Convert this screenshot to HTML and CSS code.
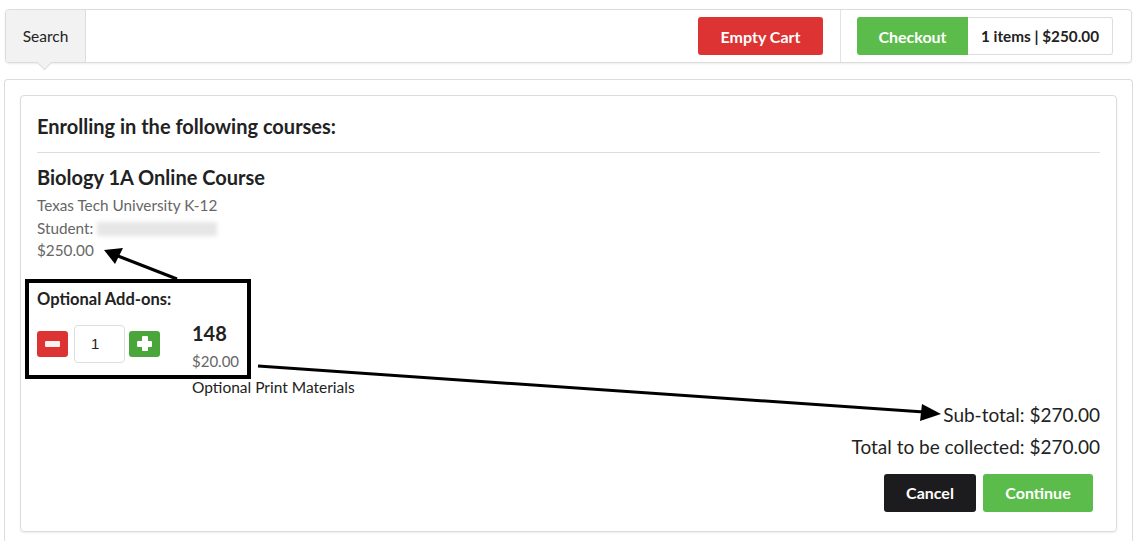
FILE: index.html
```html
<!DOCTYPE html>
<html>
<head>
<meta charset="utf-8">
<link rel="stylesheet" href="styles.css">
</head>
<body>
<div class="topbar">
  <div class="search-tab">Search</div>
  <div class="spacer"></div>
  <div class="cart-section">
    <button class="btn btn-red">Empty Cart</button>
  </div>
  <div class="checkout-section">
    <button class="btn btn-green checkout">Checkout</button>
    <div class="items">1 items | $250.00</div>
  </div>
</div>

<div class="outer">
  <div class="card">
    <h2 class="heading">Enrolling in the following courses:</h2>
    <div class="rule"></div>
    <h3 class="course">Biology 1A Online Course</h3>
    <div class="meta">Texas Tech University K-12</div>
    <div class="meta">Student: <span class="blurred"></span></div>
    <div class="meta">$250.00</div>

    <div class="addons">
      <div class="addons-title">Optional Add-ons:</div>
      <div class="addon-row">
        <div class="qty">
          <button class="qbtn qminus"><span class="bar"></span></button>
          <div class="qinput">1</div>
          <button class="qbtn qplus"><span class="bar"></span><span class="bar vbar"></span></button>
        </div>
        <div class="addon-info">
          <div class="addon-num">148</div>
          <div class="addon-price">$20.00</div>
          <div class="addon-name">Optional Print Materials</div>
        </div>
      </div>
    </div>

    <div class="totals">
      <div class="total-line">Sub-total: $270.00</div>
      <div class="total-line">Total to be collected: $270.00</div>
    </div>
    <div class="actions">
      <button class="btn btn-dark">Cancel</button>
      <button class="btn btn-green">Continue</button>
    </div>
  </div>
</div>

<svg class="annot" width="1142" height="541" viewBox="0 0 1142 541">
  <rect x="27" y="281" width="222" height="96" fill="none" stroke="#000" stroke-width="4"/>
  <line x1="177" y1="279" x2="118" y2="256" stroke="#000" stroke-width="3"/>
  <polygon points="104,250 123,248 115,264" fill="#000"/>
  <line x1="258" y1="366" x2="924" y2="412" stroke="#000" stroke-width="3"/>
  <polygon points="941,414 922,404 920,421" fill="#000"/>
</svg>
</body>
</html>
```

FILE: styles.css
```css
* { box-sizing: border-box; }
html, body { margin: 0; padding: 0; background: #fff; }
body {
  font-family: Lato, "Open Sans", "Liberation Sans", sans-serif;
  color: #222;
  position: relative;
  width: 1142px;
  height: 541px;
  overflow: hidden;
}
button { font-family: inherit; border: none; cursor: pointer; }

.topbar {
  margin: 9px 10px 0 5px;
  height: 54px;
  border: 1px solid #dcdcdc;
  border-radius: 4px;
  box-shadow: 0 1px 2px rgba(0,0,0,0.08);
  display: flex;
  align-items: stretch;
  background: #fff;
}
.search-tab {
  width: 80px;
  background: #f2f2f2;
  border-right: 1px solid #ddd;
  display: flex;
  align-items: center;
  justify-content: center;
  font-size: 15.5px;
  color: #222;
  position: relative;
  border-radius: 3px 0 0 3px;
}
.search-tab::after {
  content: "";
  position: absolute;
  left: 33px;
  bottom: -6px;
  width: 10px;
  height: 10px;
  background: #f2f2f2;
  transform: rotate(45deg);
  border-right: 1px solid #ddd;
  border-bottom: 1px solid #ddd;
}
.spacer { flex: 1; }
.cart-section {
  display: flex;
  align-items: center;
  padding: 0 17px;
  border-right: 1px solid #e2e2e2;
}
.checkout-section {
  display: flex;
  align-items: center;
  padding: 0 18px 0 16px;
}
.btn {
  height: 38px;
  border-radius: 3px;
  font-size: 16px;
  font-weight: 700;
  color: #fff;
  padding: 0;
}
.btn-red { background: #dd3333; width: 125px; }
.btn-green { background: #5bbb4b; width: 110px; }
.btn-dark { background: #1c1c1e; width: 92px; }
.checkout { width: 111px; border-radius: 3px 0 0 3px; }
.items {
  height: 38px;
  width: 145px;
  border: 1px solid #ddd;
  border-left: none;
  border-radius: 0 3px 3px 0;
  display: flex;
  align-items: center;
  justify-content: center;
  font-size: 15.3px;
  font-weight: 700;
  color: #222;
}

.outer {
  margin: 16px 9px 0 4px;
  border: 1px solid #dcdcdc;
  border-bottom: none;
  border-radius: 4px 4px 0 0;
  height: 462px;
  padding: 15px 15px 0 15px;
}
.card {
  border: 1px solid #dcdcdc;
  border-radius: 4px;
  box-shadow: 0 1px 2px rgba(0,0,0,0.08);
  height: 437px;
  padding: 15px 16px 0 16px;
}
.heading {
  margin: 0;
  font-size: 20px;
  font-weight: 700;
  line-height: 30px;
  color: #222;
}
.rule {
  height: 1px;
  background: #ddd;
  margin: 11px 0 11px;
}
.course {
  margin: 0 0 4px;
  font-size: 20px;
  font-weight: 700;
  line-height: 26px;
  color: #222;
}
.meta {
  font-size: 15.3px;
  color: #666;
  line-height: 22.5px;
}
.blurred {
  display: inline-block;
  width: 120px;
  height: 14px;
  vertical-align: -2px;
  background: #e6e6e6;
  filter: blur(2px);
}
.addons { margin-top: 27px; }
.addons-title {
  font-size: 16.5px;
  font-weight: 700;
  line-height: 20px;
  color: #222;
}
.addon-row {
  display: flex;
  margin-top: 16px;
}
.qty {
  display: flex;
  align-items: center;
  gap: 6px;
  height: 38px;
  width: 155px;
}
.qbtn {
  width: 31px;
  height: 26px;
  border-radius: 3px;
  position: relative;
  padding: 0;
}
.qminus { background: #dd3333; }
.qplus { background: #4aa63a; margin-left: -2px; }
.bar {
  position: absolute;
  left: 8px;
  top: 10px;
  width: 15px;
  height: 6px;
  background: #fff;
  border-radius: 1px;
}
.qplus .vbar {
  left: 12.5px;
  top: 5.5px;
  width: 6px;
  height: 15px;
}
.qminus .bar { opacity: 0.92; }
.qinput {
  width: 51px;
  height: 38px;
  border: 1px solid #ddd;
  border-radius: 4px;
  line-height: 36px;
  padding-left: 16px;
  color: #222;
  font-family: "Liberation Sans", Arial, sans-serif;
  font-size: 15px;
}
.addon-info { margin-top: -6px; }
.addon-num {
  font-size: 20px;
  font-weight: 700;
  line-height: 28px;
  color: #222;
}
.addon-price {
  font-size: 15px;
  color: #666;
  line-height: 29px;
}
.addon-name {
  font-size: 15.5px;
  line-height: 23px;
  color: #222;
}
.totals {
  margin-top: 0;
  text-align: right;
}
.total-line {
  font-size: 19px;
  line-height: 32px;
  color: #222;
}
.actions {
  display: flex;
  justify-content: flex-end;
  gap: 7px;
  padding-right: 7px;
  margin-top: 11px;
}

.annot {
  position: absolute;
  left: 0;
  top: 0;
  pointer-events: none;
}
```
